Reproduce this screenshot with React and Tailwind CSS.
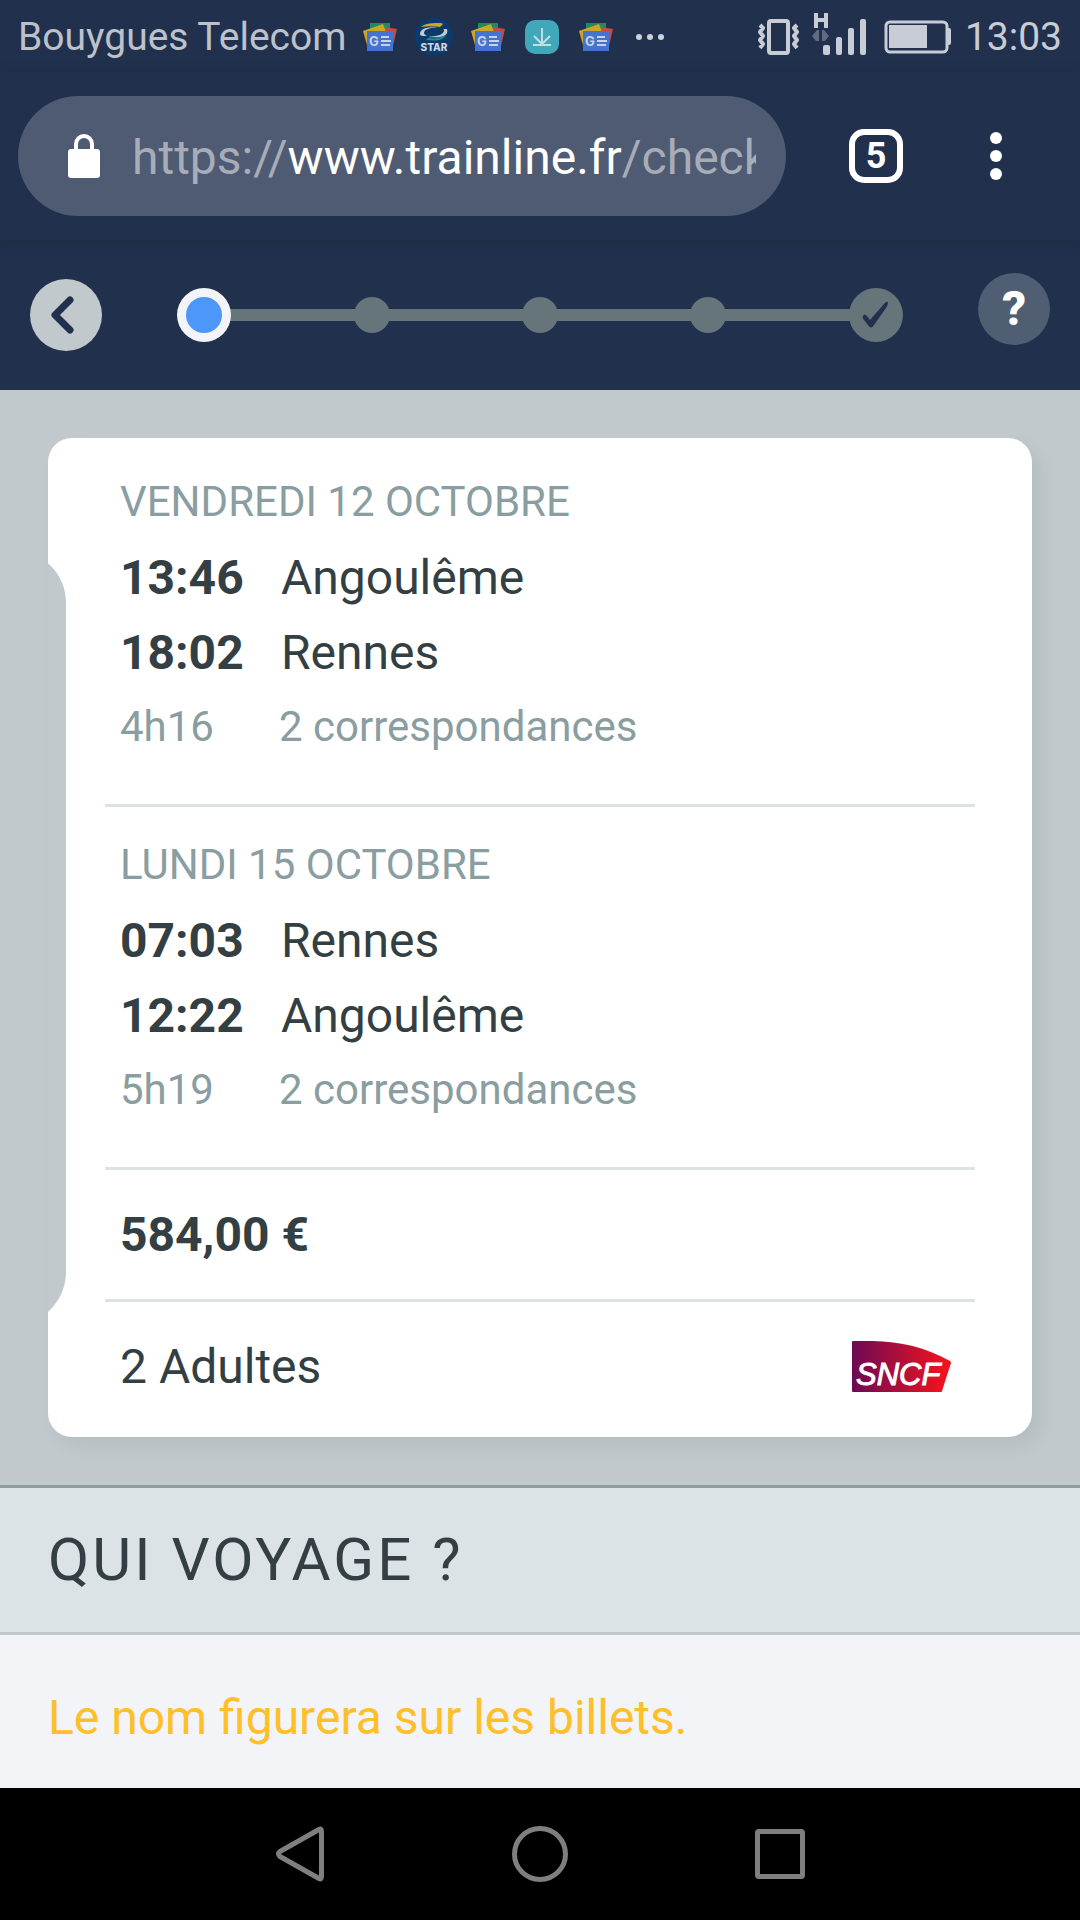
import React from 'react';

const trips = [
  {
    date: 'Vendredi 12 octobre',
    stops: [
      { time: '13:46', city: 'Angoulême' },
      { time: '18:02', city: 'Rennes' },
    ],
    duration: '4h16',
    changes: '2 correspondances',
  },
  {
    date: 'Lundi 15 octobre',
    stops: [
      { time: '07:03', city: 'Rennes' },
      { time: '12:22', city: 'Angoulême' },
    ],
    duration: '5h19',
    changes: '2 correspondances',
  },
];

function NewsIcon() {
  return (
    <svg width="38" height="38" viewBox="0 0 38 38" aria-hidden="true">
      <path d="M9 5h20v10H9z" fill="#1f8a5c" />
      <path d="M24 9l12 2-4 17-8-2z" fill="#c54a40" />
      <path d="M2 13l20-7 3 8-19 13z" fill="#cfa528" />
      <rect x="6" y="13" width="26" height="20" fill="#4474cf" />
      <text x="8" y="28" fontFamily="Inter, sans-serif" fontSize="13" fontWeight="700" fill="#c9d3e6">
        G
      </text>
      <path d="M20 19h8M20 23h10M20 27h9" stroke="#c9d3e6" strokeWidth="2" />
    </svg>
  );
}

function StarIcon() {
  return (
    <svg width="38" height="38" viewBox="0 0 38 38" aria-hidden="true">
      <circle cx="19" cy="19" r="19" fill="#0b3a6d" />
      <path d="M6 9c4-4 12-4 20-4l2 1-3 3c-7-1-13-1-19 0z" fill="#cfa528" />
      <path d="M5 16c0-6 8-7 17-7-7 1-13 2-13 6 0 1 1 2 3 3-4 0-7 0-7-2z" fill="#c3ccd4" />
      <path d="M32 11c2 7-5 9-19 8 9-1 15-2 16-6 0-1 0-2-1-2h4z" fill="#c3ccd4" />
      <path d="M31 17c-3 6-11 6-20 5l2-2c8 1 12 0 18-3z" fill="#17908f" />
      <text x="19" y="33" textAnchor="middle" fontFamily="Inter, sans-serif" fontSize="10" fontWeight="800" fill="#cfd6dd">
        STAR
      </text>
    </svg>
  );
}

function DownloadIcon() {
  return (
    <svg width="38" height="38" viewBox="0 0 38 38" aria-hidden="true">
      <rect x="2" y="2" width="34" height="34" rx="10" fill="#40a8b8" />
      <path d="M19 10v15M11 18l8 8 8-8M10 27h18" fill="none" stroke="#c4dde3" strokeWidth="2" />
    </svg>
  );
}

function MoreDots() {
  return (
    <svg width="38" height="38" viewBox="0 0 38 38" fill="#cfd1d9" aria-hidden="true">
      <circle cx="8" cy="19" r="3" />
      <circle cx="19" cy="19" r="3" />
      <circle cx="30" cy="19" r="3" />
    </svg>
  );
}

function VibrateIcon() {
  return (
    <svg width="42" height="36" viewBox="0 0 42 36" fill="none" stroke="#c8ccd4" aria-hidden="true">
      <rect x="11" y="2" width="19" height="32" rx="2" strokeWidth="4" />
      <path d="M2 6l3 3-3 4 3 4-3 4 3 4-3 4M39 6l-3 3 3 4-3 4 3 4-3 4 3 4" strokeWidth="4" strokeLinejoin="round" />
    </svg>
  );
}

function SignalIcon() {
  return (
    <svg width="54" height="44" viewBox="0 0 54 44" fill="#c8ccd4" aria-hidden="true">
      <path d="M2 2h4v5h6V2h4v15h-4v-6H6v6H2z" />
      <path d="M0 25l5-6h2v11H4zM17 25l-5-6h-2v11h3z" fill="#616c82" />
      <rect x="11" y="34" width="7" height="10" rx="2" />
      <rect x="24" y="26" width="6" height="18" rx="2" />
      <rect x="36" y="17" width="6" height="27" rx="2" />
      <rect x="48" y="8" width="6" height="36" rx="2" />
    </svg>
  );
}

function BatteryIcon() {
  return (
    <svg width="67" height="34" viewBox="0 0 67 34" fill="#c8ccd4" aria-hidden="true">
      <rect x="2" y="2" width="61" height="30" rx="4" fill="none" stroke="#c8ccd4" strokeWidth="3" />
      <rect x="5" y="5" width="38" height="23" />
      <path d="M63 8h2a2 2 0 0 1 2 2v13a2 2 0 0 1-2 2h-2z" />
    </svg>
  );
}

function SncfLogo() {
  return (
    <svg width="99" height="51" viewBox="0 0 99 51" role="img" aria-label="SNCF">
      <defs>
        <linearGradient id="sncf" x1="0" x2="1" y1="0" y2="0">
          <stop offset="0" stopColor="#6b0a52" />
          <stop offset="0.35" stopColor="#9c0d42" />
          <stop offset="0.9" stopColor="#ec1220" />
          <stop offset="1" stopColor="#ee1320" />
        </linearGradient>
      </defs>
      <path
        d="M1 0C38-1 68 3 98 20q1 1 1 2L90 50q0 1-1 1H1q-1 0-1-1V1q0-1 1-1z"
        fill="url(#sncf)"
      />
      <text
        x="4"
        y="44"
        fontFamily="'Liberation Sans', sans-serif"
        fontSize="31"
        fontStyle="italic"
        fill="#fff"
        stroke="#fff"
        strokeWidth="1"
      >
        SNCF
      </text>
    </svg>
  );
}

function StatusBar() {
  return (
    <div className="h-[72px] px-[18px] pt-px flex items-center justify-between text-[#bcc1ca]">
      <div className="flex items-center gap-[15px]">
        <span className="text-[39px] leading-[48px]">Bouygues Telecom</span>
        <div className="flex items-center gap-4">
          <NewsIcon />
          <StarIcon />
          <NewsIcon />
          <DownloadIcon />
          <NewsIcon />
          <MoreDots />
        </div>
      </div>
      <div className="flex items-center">
        <VibrateIcon />
        <div className="ml-3 pb-2">
          <SignalIcon />
        </div>
        <div className="ml-[18px]">
          <BatteryIcon />
        </div>
        <span className="ml-[14px] text-[39px] leading-[48px] text-[#c8ccd4]">13:03</span>
      </div>
    </div>
  );
}

function BrowserBar() {
  return (
    <div className="relative z-10 h-[168px] pl-[18px] pr-6 flex items-center bg-[#21304d] shadow-[0_3px_9px_rgba(30,40,60,0.5)]">
      <button className="flex-1 min-w-0 h-[120px] mr-[30px] pl-[50px] pr-[30px] rounded-full bg-[#4f5b72] flex items-center gap-8">
        <svg width="32" height="44" viewBox="0 0 32 44" className="shrink-0" aria-hidden="true">
          <rect x="0" y="15" width="32" height="29" rx="3" fill="#fff" />
          <path d="M8 16v-6a8 8 0 0 1 16 0v6" fill="none" stroke="#fff" strokeWidth="4" />
        </svg>
        <span className="flex-1 min-w-0 pt-[3px] overflow-hidden whitespace-nowrap text-left text-[48px] leading-[60px] text-[#a7adb8]">
          https://<span className="text-white">www.trainline.fr</span>/check
        </span>
      </button>
      <button className="w-[120px] h-[120px] flex items-center justify-center" aria-label="Onglets">
        <span className="w-[54px] h-[54px] border-6 border-white rounded-[15px] flex items-center justify-center text-white text-[36px] leading-none font-bold">
          5
        </span>
      </button>
      <button className="w-[120px] h-[120px] flex flex-col items-center justify-center gap-1.5" aria-label="Menu">
        <span className="w-3 h-3 rounded-full bg-white"></span>
        <span className="w-3 h-3 rounded-full bg-white"></span>
        <span className="w-3 h-3 rounded-full bg-white"></span>
      </button>
    </div>
  );
}

function Step({ state }) {
  if (state === 'current') {
    return (
      <li className="relative z-10 w-[54px] h-[54px] rounded-full bg-[#f2f4f8] flex items-center justify-center">
        <span className="w-9 h-9 rounded-full bg-[#4d97fa]"></span>
      </li>
    );
  }
  if (state === 'last') {
    return (
      <li className="relative z-10 w-[54px] h-[54px] rounded-full bg-[#667579] flex items-center justify-center">
        <svg width="28" height="28" viewBox="0 0 28 28" aria-hidden="true">
          <path
            d="M1 15q1-3 4 0l3 4L22 3q3-4 4-1 0 2-2 5L12 24q-3 5-6 0L2 19q-2-2-1-4z"
            fill="#21304d"
          />
        </svg>
      </li>
    );
  }
  return (
    <li className="w-[54px] h-[54px] flex items-center justify-center">
      <span className="w-9 h-9 rounded-full bg-[#667579]"></span>
    </li>
  );
}

function StepBar() {
  return <li className="flex-1 h-3 -mx-3 bg-[#667579]" aria-hidden="true"></li>;
}

function CheckoutHeader() {
  return (
    <header className="h-[150px] px-[30px] pt-[33px] flex items-start">
      <button
        className="w-[72px] h-[72px] mt-1.5 rounded-full bg-[#c1c9cc] flex items-center justify-center"
        aria-label="Retour"
      >
        <svg width="36" height="42" viewBox="0 0 36 42" className="mr-2" aria-hidden="true">
          <path
            d="M26 6L11 21l15 15"
            fill="none"
            stroke="#21304d"
            strokeWidth="7"
            strokeLinecap="round"
            strokeLinejoin="round"
          />
        </svg>
      </button>
      <ol className="flex-1 mx-[75px] mt-[15px] flex items-center">
        <Step state="current" />
        <StepBar />
        <Step />
        <StepBar />
        <Step />
        <StepBar />
        <Step />
        <StepBar />
        <Step state="last" />
      </ol>
      <button
        className="w-[72px] h-[72px] rounded-full bg-[#505e73] flex items-center justify-center text-white text-[48px] leading-none font-extrabold"
        aria-label="Aide"
      >
        ?
      </button>
    </header>
  );
}

function Trip({ trip }) {
  return (
    <section className="px-[15px] pt-7 pb-[47px] border-b-3 border-[#dbe3e6]">
      <h2 className="uppercase text-[42px] leading-[60px] text-[#8a9da1]">{trip.date}</h2>
      <div className="mt-2 mb-[7px]">
        {trip.stops.map((stop) => (
          <div key={stop.time} className="flex text-[48px] leading-[75px]">
            <span className="w-[161px] font-bold">{stop.time}</span>
            <span>{stop.city}</span>
          </div>
        ))}
      </div>
      <div className="flex text-[42px] leading-[60px] text-[#8a9da1]">
        <span className="w-[159px]">{trip.duration}</span>
        <span>{trip.changes}</span>
      </div>
    </section>
  );
}

function TicketCard() {
  return (
    <div className="relative px-[57px] py-1.5 rounded-3xl bg-white text-[48px] leading-[75px] text-[#333f42] shadow-[9px_9px_15px_rgba(51,63,66,0.08)]">
      {/* Notch cut out of the left edge */}
      <div className="absolute left-0 top-[125px] bottom-[125px] w-[18px] overflow-hidden">
        <div className="absolute right-0 -top-[13px] -bottom-[13px] w-[106px] rounded-full bg-[#c1c9cc]"></div>
      </div>

      {trips.map((trip) => (
        <Trip key={trip.date} trip={trip} />
      ))}
      <div className="px-[15px] py-[27px] border-b-3 border-[#dbe3e6] font-bold">584,00 €</div>
      <div className="pl-[15px] pr-6 py-[27px] flex items-center justify-between">
        <span>2 Adultes</span>
        <SncfLogo />
      </div>
    </div>
  );
}

function AndroidNav() {
  return (
    <nav className="h-[132px] bg-black flex justify-center">
      <button className="w-60 flex items-center justify-center" aria-label="Précédent">
        <svg width="56" height="60" viewBox="0 0 56 60" fill="none" stroke="#7f7f7f" strokeWidth="5">
          <path d="M47 5.500Q49.500 4 49.500 8v44q0 4-2.500 2.500L8 32.500Q5 30 8 27.500z" strokeLinejoin="round" />
        </svg>
      </button>
      <button className="w-60 flex items-center justify-center" aria-label="Accueil">
        <span className="w-14 h-14 rounded-full border-5 border-[#7f7f7f]"></span>
      </button>
      <button className="w-60 flex items-center justify-center" aria-label="Applications récentes">
        <span className="w-[50px] h-[50px] rounded-[4px] border-5 border-[#7f7f7f]"></span>
      </button>
    </nav>
  );
}

export default function App() {
  return (
    <div className="min-h-screen flex flex-col bg-[#f2f4f8] font-[Roboto,sans-serif]">
      <div className="bg-[#21304d]">
        <StatusBar />
        <BrowserBar />
        <CheckoutHeader />
      </div>

      <main className="flex-1">
        <div className="p-12 bg-[#c1c9cc]">
          <TicketCard />
        </div>
        <h1 className="px-12 py-9 border-t-3 border-t-[#8a9da1] border-b-3 border-b-[#c1c9cc] bg-[#dbe3e6] text-[60px] leading-[72px] tracking-wider uppercase text-[#333f42]">
          Qui voyage ?
        </h1>
        <p className="px-12 pt-[45px] pb-[33px] text-[48px] leading-[75px] text-[#ffbf29]">
          Le nom figurera sur les billets.
        </p>
      </main>

      <AndroidNav />
    </div>
  );
}
